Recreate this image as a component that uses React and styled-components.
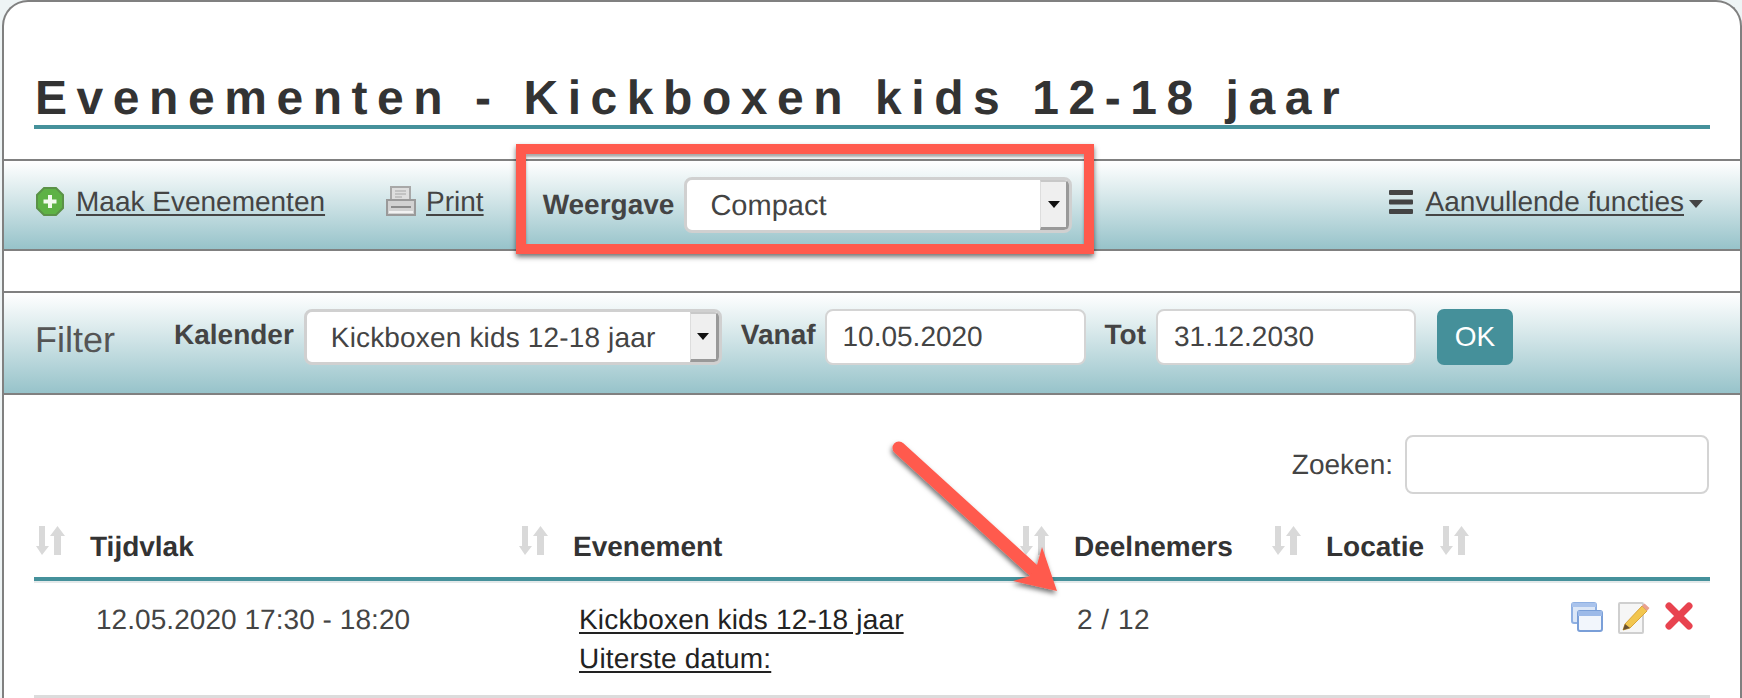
import React from "react";
import styled, { createGlobalStyle } from "styled-components";

const Global = createGlobalStyle`
  html, body { margin: 0; padding: 0; background: #eef4f5; }
  body { font-family: "Liberation Sans", Arial, sans-serif; font-size: 28px; color: #444; text-rendering: geometricPrecision; }
  * { box-sizing: border-box; }
`;

const TEAL = "#45919b";
const COLS = "483px 501px 252px 168px 272px";

const Page = styled.div`position: relative; width: 1742px; height: 698px; overflow: hidden;`;
const Frame = styled.main`
  margin-left: 2px; width: 1740px; height: 698px; background: #fff;
  border: 2px solid #808080; border-bottom: none; border-radius: 26px 26px 0 0;
  overflow: hidden;
`;
const Title = styled.h1`
  margin: 0 0 30px 30px; width: 1676px; padding: 71px 0 0 1px;
  font-size: 48px; line-height: 52px; font-weight: 700; letter-spacing: 9.55px; color: #333;
  border-bottom: 4px solid ${TEAL}; white-space: nowrap;
`;
const Bar = styled.div`
  display: flex; align-items: ${p => p.$top ? "flex-start" : "center"};
  height: ${p => p.$h}px; padding: ${p => p.$top ? "16px 0 0 31px" : "0 37px 0 32px"};
  border-top: 2px solid #808080; border-bottom: 2px solid #808080;
  background: linear-gradient(#fff 0%, #dcebed 35%, #97c3ca 100%);
  margin-bottom: ${p => p.$mb || 0}px;
`;
const Action = styled.div`
  display: flex; align-items: center; gap: ${p => p.$gap}px; margin-right: ${p => p.$mr || 0}px;
  margin-left: ${p => p.$auto ? "auto" : 0}; margin-bottom: 7px;
`;
const NavLink = styled.a`color: #444; text-decoration: underline; text-underline-offset: 3px; line-height: 32px;`;
const Caret = styled.span`
  width: 0; height: 0; margin-left: -8px; margin-top: 4px;
  border-left: 7.5px solid transparent; border-right: 7.5px solid transparent; border-top: 8px solid #444;
`;
const Label = styled.label`font-weight: 700; color: #444; line-height: 32px; margin-right: ${p => p.$mr || 10}px; margin-top: ${p => p.$mt || 0}px;`;
const Select = styled.div`
  display: flex; align-items: center; justify-content: space-between;
  width: ${p => p.$w}px; height: 56px; padding: 0 0 0 ${p => p.$pl}px;
  background: #fff; border: 3px solid #d0d0d0; border-radius: 8px; margin-right: ${p => p.$mr || 0}px;
  font-size: ${p => p.$fs || 28}px; letter-spacing: ${p => p.$ls || 0}px; color: #444; overflow: hidden;
`;
const SelectText = styled.span`margin-top: 2px;`;
const SelectBtn = styled.span`
  display: flex; align-items: center; justify-content: center;
  width: 29px; height: 100%; background: #efefef;
  border-left: 1px solid #ddd; border-top: 2px solid #c8c8c8; border-right: 3px solid #999; border-bottom: 3px solid #999;
  &::after { content: ""; border-left: 6px solid transparent; border-right: 6px solid transparent; border-top: 7px solid #111; }
`;
const FieldInput = styled.div`
  width: ${p => p.$w}px; height: ${p => p.$h || 56}px; padding-left: ${p => p.$pl || 16}px;
  display: flex; align-items: center;
  background: #fff; border: 2px solid #d4d4d4; border-radius: 8px; color: #444;
  margin-right: ${p => p.$mr || 0}px;
`;
const Filter = styled.span`font-size: 36px; color: #555; line-height: 44px; margin: 9px 59px 0 0;`;
const OkButton = styled.button`
  width: 76px; height: 56px; border: none; border-radius: 7px; background: #45909a; color: #fff;
  font: 28px "Liberation Sans", Arial, sans-serif; padding: 0;
`;
const Search = styled.div`
  display: flex; justify-content: flex-end; align-items: center; gap: 12px;
  padding: 40px 31px 0 0; color: #444;
`;
const Table = styled.section`margin: 32px 0 0 30px; width: 1676px;`;
const Head = styled.div`
  display: grid; grid-template-columns: ${COLS}; height: 55px;
  border-bottom: 4px solid ${TEAL}; box-shadow: 0 2px 0 #e4e9ea;
`;
const HeadCell = styled.div`display: flex; align-items: flex-start; gap: 25px; padding-left: 2px; font-weight: 700; color: #333;`;
const HeadText = styled.span`line-height: 32px; margin-top: 5px; white-space: nowrap; margin-right: -10px;`;
const Row = styled.div`
  display: grid; grid-template-columns: ${COLS}; height: 117px;
  border-bottom: 3px solid #dcdcdc; margin-top: 0;
`;
const Cell = styled.div`padding: 19px 0 0 ${p => p.$pl}px; line-height: 39px; color: #444; letter-spacing: ${p => p.$ls || 0}px;`;
const RowLink = styled.a`display: block; color: #222; letter-spacing: .16px; text-decoration: underline; text-underline-offset: 3px;`;
const Actions = styled.div`display: flex; justify-content: flex-end; align-items: flex-start; gap: 15px; padding: 21px 17px 0 0;`;

const RedFrame = styled.div`
  position: absolute; left: 516px; top: 144px; width: 578px; height: 110px;
  border: 10px solid #ff5a4d; pointer-events: none;
  box-shadow: 0 3px 5px rgba(0,0,0,.55), inset 0 3px 3px rgba(0,0,0,.35);
`;
const ArrowLayer = styled.svg`position: absolute; left: 880px; top: 430px; overflow: visible; pointer-events: none;`;

const SortIcon = () => (
  <svg width="29" height="29" viewBox="0 0 29 29" fill="#d9d9d9">
    <path d="M3 0h6v20h4l-7 9-6-9h3z" />
    <path d="M18 29h7V10h4L21.5 0 14 10h4z" />
  </svg>
);
const PlusIcon = () => (
  <svg width="28" height="29" viewBox="0 0 28 29">
    <path d="M8 1h12l7 7v13l-7 7H8l-7-7V8z" fill="#5eb245" stroke="#5b9248" strokeWidth="2" />
    <path d="M12 8h4v4.5h4.5v4H16V21h-4v-4.5H7.500v-4H12z" fill="#f3fbef" />
  </svg>
);
const PrintIcon = () => (
  <svg width="30" height="31" viewBox="0 0 30 31">
    <path d="M5 1h19v14H5z" fill="#dedede" stroke="#a8a8a8" strokeWidth="2" />
    <path d="M9 5h11M9 8h11M9 11h7" stroke="#b9b9b9" strokeWidth="1.500" />
    <path d="M1 14h28v15H1z" fill="#d2d2d2" stroke="#9a9a9a" strokeWidth="2" />
    <path d="M5 21h20" stroke="#8c8c8c" strokeWidth="2" />
    <path d="M3 26h24" stroke="#f2f2f2" strokeWidth="2" />
  </svg>
);
const MenuIcon = () => (
  <svg width="24" height="24" viewBox="0 0 24 24" fill="#444">
    <rect width="24" height="5" rx="1" /><rect y="9.500" width="24" height="5" rx="1" /><rect y="19" width="24" height="5" rx="1" />
  </svg>
);
const WindowsIcon = () => (
  <svg width="32" height="30" viewBox="0 0 32 30">
    <rect x="1" y="1" width="24" height="20" rx="2" fill="#dce7f7" stroke="#8fb0e2" strokeWidth="2" />
    <rect x="1" y="1" width="24" height="4" fill="#a9c3ec" />
    <rect x="7" y="9" width="24" height="20" rx="2" fill="#f2f6fc" stroke="#7a9fd8" strokeWidth="2" />
    <rect x="7" y="9" width="24" height="5" fill="#9dbae8" />
  </svg>
);
const EditIcon = () => (
  <svg width="32" height="32" viewBox="0 0 32 32">
    <rect x="1" y="1" width="24" height="30" rx="1" fill="#f6f6f6" stroke="#cfcfcf" strokeWidth="2" />
    <path d="M7 22 24 4l5 5-17 17-7 2z" fill="#f2c64f" stroke="#d9a53a" strokeWidth="1" />
    <path d="M24 4l2.500-2.500 5 4.500L29 9z" fill="#e8a090" />
    <path d="M7 22l5 4-7 2z" fill="#6a5233" />
  </svg>
);
const DeleteIcon = () => (
  <svg width="28" height="28" viewBox="0 0 28 28">
    <path d="M4 4l20 20M24 4 4 24" stroke="#e8434f" strokeWidth="7" strokeLinecap="round" />
  </svg>
);

const columns = ["Tijdvlak", "Evenement", "Deelnemers", "Locatie", ""];

export default function App() {
  return (
    <Page>
      <Global />
      <Frame>
        <Title>Evenementen - Kickboxen kids 12-18 jaar</Title>
        <Bar $h={92} $mb={40}>
          <Action $gap={12} $mr={61}><PlusIcon /><NavLink>Maak Evenementen</NavLink></Action>
          <Action $gap={10} $mr={59}><PrintIcon /><NavLink>Print</NavLink></Action>
          <Label>Weergave</Label>
          <Select $w={388} $pl={23} $fs={29}><SelectText>Compact</SelectText><SelectBtn /></Select>
          <Action $auto $gap={13}><MenuIcon /><NavLink>Aanvullende functies</NavLink><Caret /></Action>
        </Bar>
        <Bar $h={104} $top>
          <Filter>Filter</Filter>
          <Label $mt={10}>Kalender</Label>
          <Select $w={418} $pl={24} $mr={19} $ls={0.16}><SelectText>Kickboxen kids 12-18 jaar</SelectText><SelectBtn /></Select>
          <Label $mt={10} $mr={9}>Vanaf</Label>
          <FieldInput $w={261} $mr={19}>10.05.2020</FieldInput>
          <Label $mt={10}>Tot</Label>
          <FieldInput $w={260} $mr={21}>31.12.2030</FieldInput>
          <OkButton>OK</OkButton>
        </Bar>
        <Search>
          <span>Zoeken:</span>
          <FieldInput $w={304} $h={59} />
        </Search>
        <Table>
          <Head>
            {columns.map((c, i) => (
              <HeadCell key={i}><SortIcon />{c && <HeadText>{c}</HeadText>}</HeadCell>
            ))}
          </Head>
          <Row>
            <Cell $pl={62} $ls={0.05}>12.05.2020 17:30 - 18:20</Cell>
            <Cell $pl={62}>
              <RowLink>Kickboxen kids 12-18 jaar</RowLink>
              <RowLink>Uiterste datum:</RowLink>
            </Cell>
            <Cell $pl={59} $ls={0.5}>2 / 12</Cell>
            <Cell $pl={0} />
            <Actions><WindowsIcon /><EditIcon /><DeleteIcon /></Actions>
          </Row>
        </Table>
      </Frame>
      <RedFrame />
      <ArrowLayer width="190" height="170" viewBox="880 430 190 170">
        <defs>
          <filter id="arrowShadow" x="-20%" y="-20%" width="140%" height="140%">
            <feDropShadow dx="-1" dy="3" stdDeviation="2.500" floodColor="#000" floodOpacity=".55" />
          </filter>
        </defs>
        <g filter="url(#arrowShadow)" fill="#ff5a4d">
          <path d="M899 448 1033 570" stroke="#ff5a4d" strokeWidth="13" strokeLinecap="round" />
          <path d="M1057 591 1042 547 1037 565 1030 576 1013 581z" />
        </g>
      </ArrowLayer>
    </Page>
  );
}
